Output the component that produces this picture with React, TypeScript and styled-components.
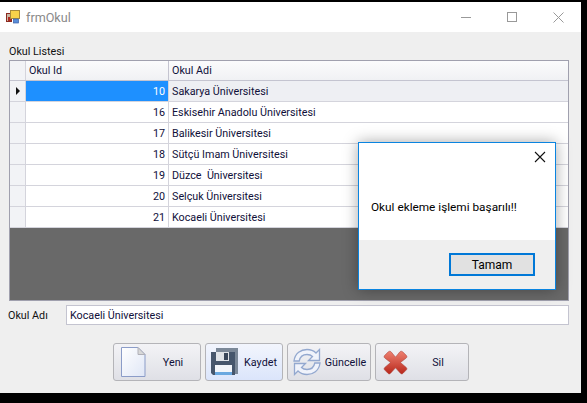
import React from "react";
import styled, { createGlobalStyle } from "styled-components";

const GlobalStyle = createGlobalStyle`
    html, body {
        margin: 0;
        padding: 0;
        background: #000;
    }
`;

const Screen = styled.div`
    width: 587px;
    height: 403px;
    background: #000;
    overflow: hidden;
    padding-top: 2px;
    box-sizing: border-box;
    font-family: Roboto, "Noto Sans", sans-serif;
    font-size: 10.75px;
    color: #10103a;
`;

const Window = styled.div`
    position: relative;
    width: 581px;
    height: 391px;
    background: #efefef;
    display: flex;
    flex-direction: column;
`;

const TitleBar = styled.div`
    height: 30px;
    background: #fff;
    display: flex;
    align-items: center;
    padding-left: 6px;
    gap: 6px;
    color: #8a8a8a;
    font-size: 12.6px;
`;

const TitleText = styled.span`
    flex: 1;
`;

const WindowControls = styled.div`
    display: flex;
    align-items: center;
    height: 100%;
`;

const ControlSlot = styled.div`
    width: 46px;
    height: 30px;
    display: flex;
    align-items: center;
    justify-content: center;
`;

const Body = styled.div`
    flex: 1;
    padding: 12px 12px 0 9px;
    display: flex;
    flex-direction: column;
`;

const ListLabel = styled.div`
    height: 16px;
    line-height: 15px;
    color: #111;
`;

const Grid = styled.div`
    height: 241px;
    box-sizing: border-box;
    border: 1px solid #a0a0ae;
    background: #696969;
    display: flex;
    flex-direction: column;
`;

const HeaderRow = styled.div`
    display: flex;
    height: 19px;
    background: linear-gradient(#fbfbfc, #f0f1f4);
    border-bottom: 1px solid #c4c4d0;
`;

const Row = styled.div<{ $current?: boolean }>`
    display: flex;
    height: 20px;
    background: ${p => (p.$current ? "#eeeff3" : "#fff")};
    border-bottom: 1px solid #d4d4dc;
`;

const RowHeader = styled.div`
    width: 15px;
    flex: none;
    background: #f2f3f6;
    border-right: 1px solid #d4d4dc;
    display: flex;
    align-items: center;
    justify-content: center;
`;

const Arrow = styled.div`
    width: 0;
    height: 0;
    border-left: 4px solid #111;
    border-top: 4px solid transparent;
    border-bottom: 4px solid transparent;
`;

const IdCell = styled.div<{ $selected?: boolean }>`
    width: 143px;
    flex: none;
    box-sizing: border-box;
    padding-right: 3px;
    text-align: right;
    line-height: 22px;
    border-right: 1px solid #d4d4dc;
    background: ${p => (p.$selected ? "#1e90ff" : "transparent")};
    color: ${p => (p.$selected ? "#fff" : "inherit")};
`;

const NameCell = styled.div`
    flex: 1;
    padding-left: 3px;
    line-height: 22px;
    white-space: pre;
`;

const HeadNameCell = styled(NameCell)`
    line-height: 20px;
`;

const HeadIdCell = styled(HeadNameCell)`
    flex: none;
    width: 143px;
    box-sizing: border-box;
    border-right: 1px solid #c4c4d0;
`;

const NameField = styled.div`
    display: flex;
    align-items: center;
    margin-top: 4px;
    height: 20px;
`;

const FieldLabel = styled.div`
    width: 58px;
    margin-left: -1px;
    color: #111;
`;

const FieldBox = styled.div`
    flex: 1;
    height: 20px;
    box-sizing: border-box;
    background: #fff;
    border: 1px solid #c4c4d0;
    padding-left: 3px;
    line-height: 19px;
`;

const ButtonRow = styled.div`
    display: flex;
    gap: 4px;
    margin-top: 18px;
    margin-left: 104px;
`;

const ToolButton = styled.div<{ $w: number; $hot?: boolean }>`
    width: ${p => p.$w}px;
    height: 38px;
    box-sizing: border-box;
    border: 1px solid #b4b4b8;
    border-radius: 3px;
    background: ${p =>
        p.$hot
            ? "linear-gradient(#f2f5fd, #dbe5fb)"
            : "linear-gradient(#f3f3f6, #dfe0e6)"};
    display: flex;
    align-items: center;
`;

const ButtonIcon = styled.svg<{ $left: number }>`
    flex: none;
    margin-left: ${p => p.$left}px;
`;

const ButtonText = styled.span`
    flex: 1;
    text-align: center;
`;

const Dialog = styled.div`
    position: absolute;
    left: 358px;
    top: 140px;
    width: 198px;
    height: 148px;
    box-sizing: border-box;
    border: 1px solid #0a84e0;
    background: #fff;
    box-shadow: 0 0 14px rgba(0, 0, 0, 0.35);
    display: flex;
    flex-direction: column;
`;

const DialogTop = styled.div`
    height: 97px;
    display: flex;
    flex-direction: column;
`;

const DialogClose = styled.div`
    align-self: flex-end;
    margin: 8px 9px 0 0;
    height: 12px;
`;

const DialogText = styled.div`
    margin: 37px 0 0 12px;
    font-size: 11.8px;
    color: #000;
`;

const DialogFooter = styled.div`
    flex: 1;
    background: #efefef;
    display: flex;
    justify-content: flex-end;
    padding: 13px 20px 0 0;
`;

const OkButton = styled.div`
    width: 86px;
    height: 23px;
    box-sizing: border-box;
    border: 2px solid #0078d7;
    background: #e1e1e1;
    color: #000;
    font-size: 12px;
    text-align: center;
    line-height: 21px;
`;

const rows = [
    { id: 10, name: "Sakarya Üniversitesi" },
    { id: 16, name: "Eskisehir Anadolu Üniversitesi" },
    { id: 17, name: "Balikesir Üniversitesi" },
    { id: 18, name: "Sütçü Imam Üniversitesi" },
    { id: 19, name: "Düzce  Üniversitesi" },
    { id: 20, name: "Selçuk Üniversitesi" },
    { id: 21, name: "Kocaeli Üniversitesi" },
];

const AppIcon = () => (
    <svg width="14" height="14" viewBox="0 0 14 14">
        <rect x="0.5" y="3.5" width="5" height="8" fill="#c9b7a5" stroke="#8a2a20" />
        <rect x="2" y="7" width="3" height="4" fill="#b02a20" />
        <rect x="4.5" y="0.5" width="9" height="8" fill="#f8d24a" stroke="#a88a3a" />
        <rect x="7.5" y="9" width="5" height="4" fill="#5a8ed8" stroke="#3a5ea8" strokeWidth="0.7" />
    </svg>
);

const PageIcon = () => (
    <ButtonIcon $left={7} width="25" height="30" viewBox="0 0 25 30">
        <defs>
            <linearGradient id="pg" x1="0" y1="0" x2="1" y2="1">
                <stop offset="0" stopColor="#ffffff" />
                <stop offset="1" stopColor="#dfe6f6" />
            </linearGradient>
        </defs>
        <path d="M0.5 0.5H17L24 7.5V29.5H0.5Z" fill="url(#pg)" stroke="#8b9cc8" />
        <path d="M17 0.5V7.5H24Z" fill="#d8d8d8" stroke="#b0b0b8" />
    </ButtonIcon>
);

const SaveIcon = () => (
    <ButtonIcon $left={5} width="28" height="28" viewBox="0 0 28 28">
        <path d="M5 0H27V26H24V4H5Z" fill="#7b8898" />
        <path d="M0 4H24V27H2L0 25Z" fill="#46566c" />
        <rect x="5" y="4" width="13" height="9" fill="#dfe3e8" />
        <rect x="13" y="5" width="4" height="7" fill="#38465a" />
        <rect x="4" y="17" width="17" height="10" fill="#f2f5fa" />
        <rect x="4" y="24" width="17" height="3" fill="#6aa8e0" />
    </ButtonIcon>
);

const RefreshIcon = () => (
    <ButtonIcon $left={5} width="28" height="28" viewBox="0 0 28 28">
        <path
            d="M1 13C2 5 8 1.5 14 1.5C18 1.5 21 3 23 5L26.5 1.5V12.5H15.5L19.5 8.5C18 7 16 6.5 14 6.5C10 6.5 7 9 6.2 13Z"
            fill="#f0f3fb"
            stroke="#93a8cf"
            strokeWidth="1.3"
        />
        <path
            d="M27 15C26 23 20 26.5 14 26.5C10 26.5 7 25 5 23L1.5 26.5V15.5H12.5L8.5 19.5C10 21 12 21.5 14 21.5C18 21.5 21 19 21.8 15Z"
            fill="#f0f3fb"
            stroke="#93a8cf"
            strokeWidth="1.3"
        />
    </ButtonIcon>
);

const DeleteIcon = () => (
    <ButtonIcon $left={7} width="25" height="25" viewBox="0 0 28 28">
        <defs>
            <linearGradient id="del" x1="0" y1="0" x2="0" y2="1">
                <stop offset="0" stopColor="#ee8070" />
                <stop offset="1" stopColor="#b8281c" />
            </linearGradient>
        </defs>
        <path
            d="M2 6L6 2C7 1.2 8 1.2 9 2L14 8L19 2C20 1.2 21 1.2 22 2L26 6C27 7 27 8 26 9L19.5 14L26 19.5C27 20.5 27 21.5 26 22.5L22.5 26C21.5 27 20.5 27 19.5 26L14 20L8.5 26C7.5 27 6.5 27 5.5 26L2 22.5C1 21.5 1 20.5 2 19.5L8.5 14L2 9C1 8 1 7 2 6Z"
            fill="url(#del)"
            stroke="#a83a30"
            strokeWidth="0.6"
        />
    </ButtonIcon>
);

const App = () => (
    <Screen>
        <GlobalStyle />
        <Window>
            <TitleBar>
                <AppIcon />
                <TitleText>frmOkul</TitleText>
                <WindowControls>
                    <ControlSlot>
                        <svg width="10" height="10" viewBox="0 0 10 10">
                            <path d="M0 5.5H10" stroke="#999" />
                        </svg>
                    </ControlSlot>
                    <ControlSlot>
                        <svg width="10" height="10" viewBox="0 0 10 10">
                            <rect x="0.5" y="0.5" width="9" height="9" fill="none" stroke="#999" />
                        </svg>
                    </ControlSlot>
                    <ControlSlot>
                        <svg width="11" height="11" viewBox="0 0 11 11">
                            <path d="M0.5 0.5L10.5 10.5M10.5 0.5L0.5 10.5" stroke="#999" />
                        </svg>
                    </ControlSlot>
                </WindowControls>
            </TitleBar>
            <Body>
                <ListLabel>Okul Listesi</ListLabel>
                <Grid>
                    <HeaderRow>
                        <RowHeader />
                        <HeadIdCell>Okul Id</HeadIdCell>
                        <HeadNameCell>Okul Adi</HeadNameCell>
                    </HeaderRow>
                    {rows.map((row, i) => (
                        <Row key={row.id} $current={i === 0}>
                            <RowHeader>{i === 0 && <Arrow />}</RowHeader>
                            <IdCell $selected={i === 0}>{row.id}</IdCell>
                            <NameCell>{row.name}</NameCell>
                        </Row>
                    ))}
                </Grid>
                <NameField>
                    <FieldLabel>Okul Adı</FieldLabel>
                    <FieldBox>Kocaeli Üniversitesi</FieldBox>
                </NameField>
                <ButtonRow>
                    <ToolButton $w={88}>
                        <PageIcon />
                        <ButtonText>Yeni</ButtonText>
                    </ToolButton>
                    <ToolButton $w={78} $hot>
                        <SaveIcon />
                        <ButtonText>Kaydet</ButtonText>
                    </ToolButton>
                    <ToolButton $w={84}>
                        <RefreshIcon />
                        <ButtonText>Güncelle</ButtonText>
                    </ToolButton>
                    <ToolButton $w={94}>
                        <DeleteIcon />
                        <ButtonText>Sil</ButtonText>
                    </ToolButton>
                </ButtonRow>
            </Body>
            <Dialog>
                <DialogTop>
                    <DialogClose>
                        <svg width="12" height="12" viewBox="0 0 12 12">
                            <path d="M1 1L11 11M11 1L1 11" stroke="#111" strokeWidth="1.1" />
                        </svg>
                    </DialogClose>
                    <DialogText>Okul ekleme işlemi başarılı!!</DialogText>
                </DialogTop>
                <DialogFooter>
                    <OkButton>Tamam</OkButton>
                </DialogFooter>
            </Dialog>
        </Window>
    </Screen>
);

export default App;
